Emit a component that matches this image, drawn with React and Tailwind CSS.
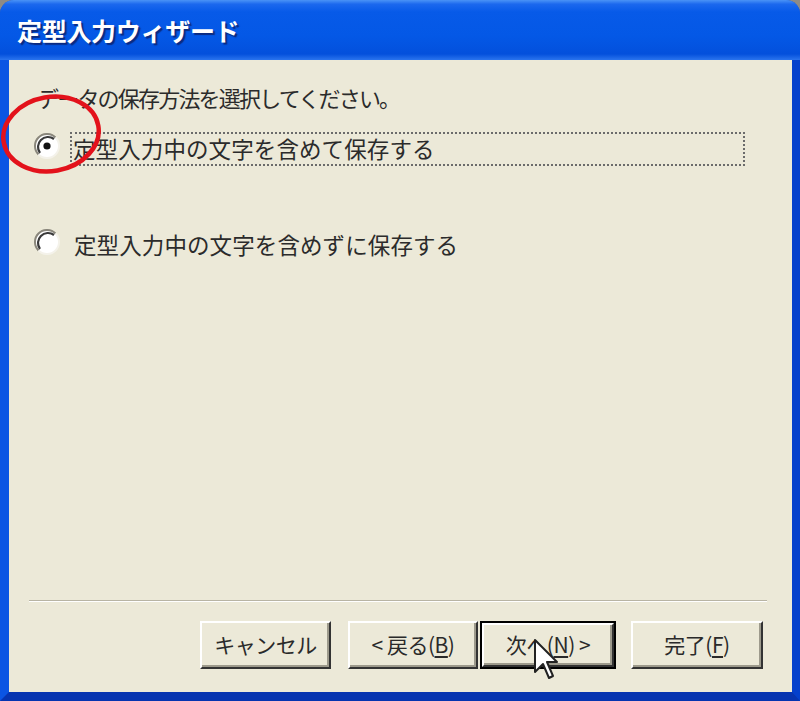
import React from "react";

function Radio({ checked }) {
  return (
    <svg width="26" height="26" viewBox="0 0 26 26" className="shrink-0">
      <circle cx="13" cy="13" r="12" fill="#ffffff" />
      <path d="M4.5 21.5 A12 12 0 0 1 21.5 4.5" stroke="#8a877c" strokeWidth="2" fill="none" />
      <path d="M6 20 A10 10 0 0 1 20 6" stroke="#3a3a3a" strokeWidth="2.2" fill="none" />
      <path d="M21.5 4.5 A12 12 0 0 1 4.5 21.5" stroke="#f4f2ea" strokeWidth="2" fill="none" />
      {checked && <circle cx="13" cy="13" r="3.6" fill="#111" />}
    </svg>
  );
}

function Btn({ children, className }) {
  return (
    <div
      className={
        "h-[48px] flex items-center justify-center bg-[#ece9d8] border-2 border-t-white border-l-white border-r-[#333] border-b-[#333] shadow-[inset_-2px_-2px_0_#9d9a8c] text-[21px] text-[#2a2a2a] tracking-[-0.5px] " +
        className
      }
    >
      {children}
    </div>
  );
}

export default function App() {
  return (
    <div className="relative w-[800px] h-[701px] bg-[#8d8b86] overflow-hidden font-['Noto_Sans_CJK_JP','Noto_Sans',sans-serif]">
      <div className="h-full flex flex-col rounded-t-[14px] overflow-hidden bg-[#0a4fd9]">
        <div className="h-[60px] shrink-0 flex items-center pl-[17px] bg-[linear-gradient(180deg,#4a93f6_0%,#1b68ee_7%,#075ae8_20%,#0458e6_60%,#0350dc_90%,#2a74ee_100%)]">
          <span className="text-white font-bold text-[25px] leading-none tracking-[-0.3px] [text-shadow:2px_2px_1px_#0b2a80]">
            定型入力ウィザード
          </span>
        </div>
        <div className="flex-1 flex flex-col border-l-[9px] border-l-[#0b55e3] border-r-[8px] border-r-[#0440cc] border-b-[9px] border-b-[#0634b0]">
          <div className="flex-1 flex flex-col bg-[#ece9d8]">
            <p className="mt-[22px] ml-[28px] text-[22px] leading-[30px] tracking-[-1.8px] text-[#2b2b2b]">
              データの保存方法を選択してください。
            </p>
            <div className="mt-[20px] ml-[25px] flex items-center">
              <div className="-mt-[6px]">
                <Radio checked />
              </div>
              <div className="ml-[10px] w-[675px] h-[34px] border-2 border-dotted border-[#6b6b6b] flex items-center pl-[1px] text-[22.5px] tracking-[0.1px] text-[#2b2b2b]">
                定型入力中の文字を含めて保存する
              </div>
            </div>
            <div className="mt-[62px] ml-[25px] flex items-center h-[34px]">
              <div className="-mt-[6px]">
                <Radio />
              </div>
              <div className="ml-[14px] text-[22.5px] tracking-[0.1px] text-[#2b2b2b]">
                定型入力中の文字を含めずに保存する
              </div>
            </div>
            <div className="flex-1" />
            <div className="ml-[20px] mr-[25px] h-[2px] bg-[#b8b4a4] border-b border-b-white" />
            <div className="mt-[19px] mb-[23px] mr-[29px] flex justify-end items-center">
              <Btn className="w-[131px]">キャンセル</Btn>
              <Btn className="w-[130px] ml-[17px]">
                &lt;&nbsp;戻る(<span className="underline underline-offset-[3px]">B</span>)
              </Btn>
              <div className="ml-[2px] w-[136px] h-[48px] border-2 border-black flex">
                <Btn className="flex-1 !h-[44px]">
                  次へ(<span className="underline underline-offset-[3px]">N</span>) &gt;
                </Btn>
              </div>
              <Btn className="w-[132px] ml-[15px]">
                完了(<span className="underline underline-offset-[3px]">F</span>)
              </Btn>
            </div>
          </div>
        </div>
      </div>

      <svg className="absolute left-0 top-[90px]" width="112" height="92" viewBox="0 0 112 92">
        <ellipse cx="51" cy="44" rx="48" ry="37" transform="rotate(-10 51 44)" fill="none" stroke="#e3121b" strokeWidth="4.5" />
      </svg>

      <svg className="absolute left-[533px] top-[638px]" width="28" height="42" viewBox="0 0 14 21">
        <path d="M1 1 L1 17 L5 13 L8 20 L10 19 L7 12 L12 12 Z" fill="#ffffff" stroke="#222" strokeWidth="1" strokeLinejoin="round" />
      </svg>
    </div>
  );
}
